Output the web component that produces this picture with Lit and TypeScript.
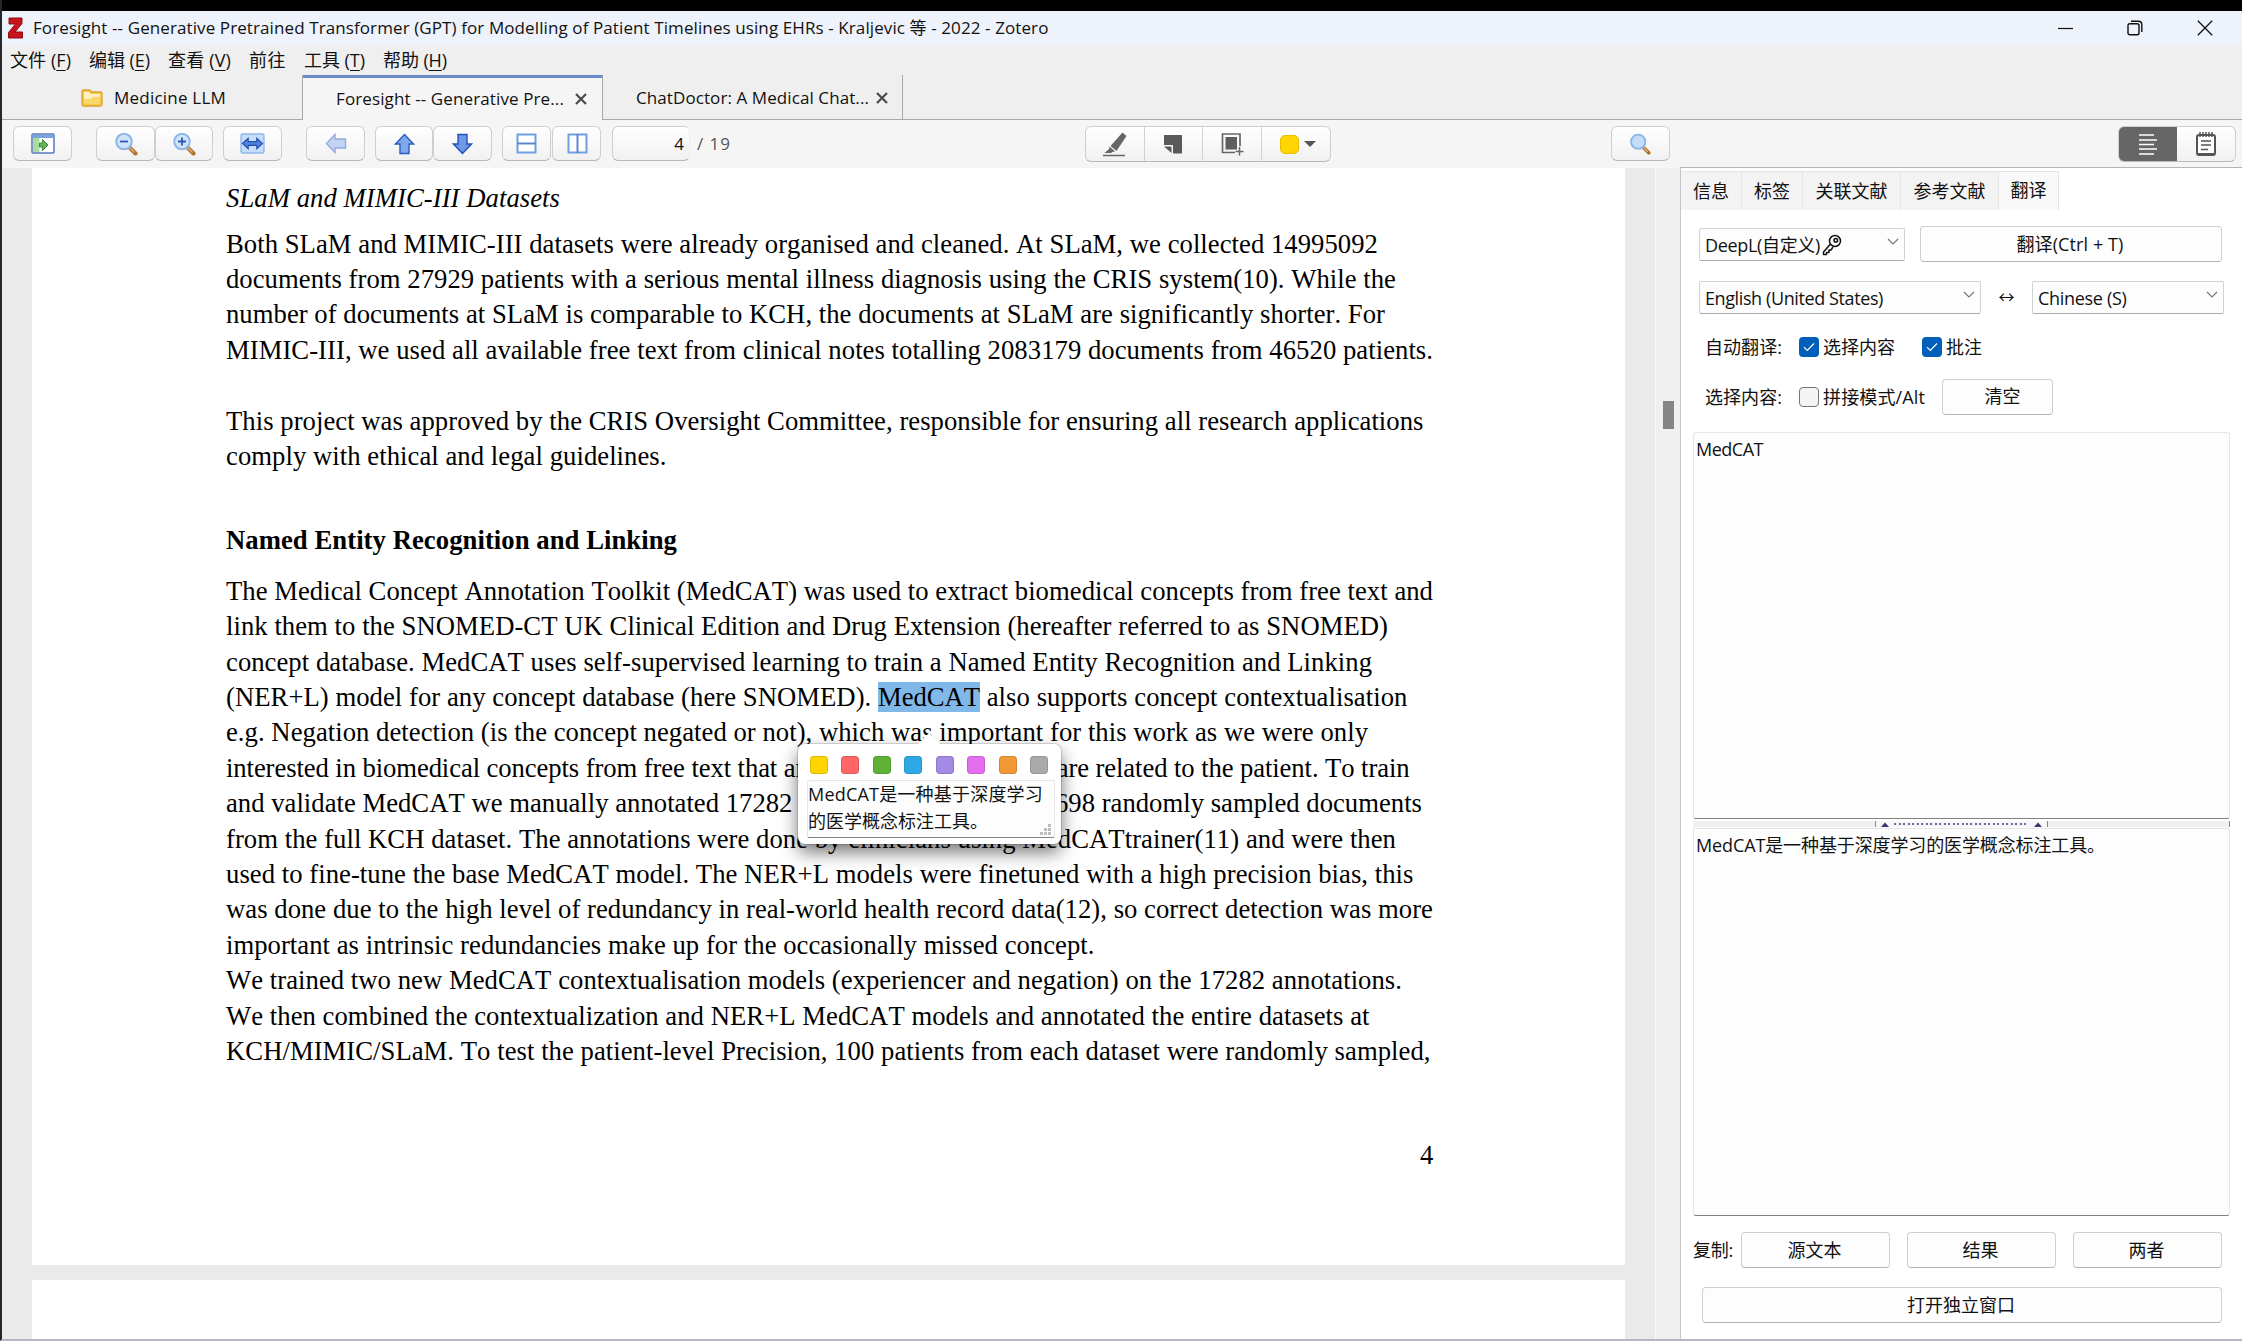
import { LitElement, html, css, svg } from "lit";
import { customElement, property, query } from "lit/decorators.js";
import { styleMap } from "lit/directives/style-map.js";

/* Text set to a fixed measure: the tracking is derived from the natural width. */
@customElement("fit-text")
class FitText extends LitElement {
  @property({ type: Number }) w = 0;
  @query(".run") run!: HTMLElement;
  static styles = css`
    :host { display: inline-block; white-space: pre; flex: none; }
  `;
  render() {
    return html`<span class="run"><slot></slot></span>`;
  }
  updated() {
    if (!this.w) return;
    const count = (this.textContent || "").length;
    this.style.letterSpacing = "0px";
    const natural = this.run.getBoundingClientRect().width;
    this.style.letterSpacing = `${(this.w - natural) / count}px`;
    this.style.width = `${this.w}px`;
  }
}

const blueStroke = "#5b86cf";

const icons = {
  zotero: svg`<svg width="16" height="22" viewBox="0 0 16 22"><path d="M1 1h13v5.500L7 15h7.500v6H.5v-5.500L7.500 7H1z" fill="#c8141c" stroke="#8f0d12" stroke-width="1"/></svg>`,
  folder: svg`<svg width="22" height="18" viewBox="0 0 22 18"><path d="M1 2.500q0-1.500 1.500-1.500h6l2 2h9q1.500 0 1.500 1.500v11q0 1.500-1.500 1.500h-17Q1 17 1 15.500z" fill="#f6c94a" stroke="#dda32b" stroke-width="1.300"/><path d="M3 3h5l2 2h9v3h-7l-2 2H3z" fill="#fdf1c0"/><path d="M3 10h8l2-2h6v7H3z" fill="#f9d86a"/></svg>`,
  close: svg`<svg width="14" height="14" viewBox="0 0 14 14"><path d="M2 2l10 10M12 2L2 12" stroke="#4a4a4a" stroke-width="2.200"/></svg>`,
  sidebar: svg`<svg width="24" height="21" viewBox="0 0 24 21"><rect x="1" y="1" width="22" height="19" rx="1" fill="#fff" stroke="#5577b8" stroke-width="1.500"/><path d="M1.500 1.500h21v3.500h-21z" fill="#7aa3dd"/><path d="M2 5h6.500v14H2z" fill="#a9dc9d"/><path d="M8.500 10h3V6.500l5.500 5.500-5.500 5.500V14h-3z" fill="#66b35c" stroke="#3c8a3c" stroke-width="1"/></svg>`,
  zoomOut: svg`<svg width="24" height="24" viewBox="0 0 24 24"><path d="M15.500 15.500l6 6" stroke="#b0712c" stroke-width="4" stroke-linecap="round"/><path d="M15.500 15.500l5 5" stroke="#e2b077" stroke-width="1.400"/><circle cx="10" cy="9.500" r="7.800" fill="#cfe3fa" stroke="#8db6e8" stroke-width="2"/><path d="M6 9.500h8" stroke="#2f57b5" stroke-width="1.800"/></svg>`,
  zoomIn: svg`<svg width="24" height="24" viewBox="0 0 24 24"><path d="M15.500 15.500l6 6" stroke="#b0712c" stroke-width="4" stroke-linecap="round"/><path d="M15.500 15.500l5 5" stroke="#e2b077" stroke-width="1.400"/><circle cx="10" cy="9.500" r="7.800" fill="#cfe3fa" stroke="#8db6e8" stroke-width="2"/><path d="M6 9.500h8M10 5.500v8" stroke="#2f57b5" stroke-width="1.800"/></svg>`,
  find: svg`<svg width="22" height="22" viewBox="0 0 24 24"><path d="M15.500 15.500l6 6" stroke="#b0712c" stroke-width="4" stroke-linecap="round"/><path d="M15.500 15.500l5 5" stroke="#e2b077" stroke-width="1.400"/><circle cx="10" cy="9.500" r="7.800" fill="#c3dcf8" stroke="#8db6e8" stroke-width="2"/></svg>`,
  fitWidth: svg`<svg width="25" height="21" viewBox="0 0 26 22"><rect x="1" y="1" width="24" height="20" rx="1.500" fill="#c6defa" stroke="#8fb8ea" stroke-width="1.500"/><path d="M2.500 11l6-5.500v3.500h9V5.500l6 5.500-6 5.500V13h-9v3.500z" fill="#4f83dc" stroke="#2450b0" stroke-width="1.200"/></svg>`,
  back: svg`<svg width="22" height="21" viewBox="0 0 22 21"><path d="M1.500 10.500L10 1.500V6h10.500v9H10v4.500z" fill="#c3d4f3" stroke="#94abe0" stroke-width="1.400"/></svg>`,
  up: svg`<svg width="21" height="22" viewBox="0 0 21 22"><path d="M10.500 1.500L19.500 11H15v9.500H6V11H1.500z" fill="#7fa9ea" stroke="#2f5cc0" stroke-width="1.400"/></svg>`,
  down: svg`<svg width="21" height="22" viewBox="0 0 21 22"><path d="M10.500 20.500L1.500 11H6V1.500h9V11h4.500z" fill="#6c9ae6" stroke="#2450b8" stroke-width="1.400"/></svg>`,
  rows: svg`<svg width="21" height="21" viewBox="0 0 21 21"><rect x="1.500" y="1.500" width="18" height="18" fill="#fff" stroke="#6f9fe3" stroke-width="2"/><path d="M1 10.500h19" stroke="${blueStroke}" stroke-width="2"/></svg>`,
  cols: svg`<svg width="21" height="21" viewBox="0 0 21 21"><rect x="1.500" y="1.500" width="18" height="18" fill="#fff" stroke="#6f9fe3" stroke-width="2"/><path d="M10.500 1v19" stroke="${blueStroke}" stroke-width="2"/></svg>`,
  pen: svg`<svg width="26" height="26" viewBox="0 0 26 26"><path d="M20.500 1.500l4 3.500-10 15-6-5z" fill="#666"/><path d="M7.500 15.500l5.500 5-2.500.500-1.500 1H2.500l4.500-4z" fill="#666"/><path d="M1 24.500h22" stroke="#666" stroke-width="1.500"/></svg>`,
  note: svg`<svg width="20" height="20" viewBox="0 0 20 20"><path d="M1 1h18v18.500h-9V11H1z" fill="#595959"/><path d="M1 12.500h7.500V19z" fill="#595959"/></svg>`,
  area: svg`<svg width="23" height="24" viewBox="0 0 23 24"><path d="M14 20.500H1.500V2H19V14" fill="none" stroke="#666" stroke-width="1.700"/><path d="M4.500 5h11.500v12.500H4.500z" fill="#5e5e5e"/><path d="M18.500 15v8.500M14.500 19.500h8" stroke="#666" stroke-width="1.500"/></svg>`,
  item: svg`<svg width="20" height="24" viewBox="0 0 20 24"><path d="M1 3h15M1 8h18M1 12.500h15M1 17h18M1 22h15" stroke="#fff" stroke-width="1.700"/></svg>`,
  notes: svg`<svg width="22" height="26" viewBox="0 0 22 26"><rect x="2" y="4" width="18" height="20" rx="2" fill="#fff" stroke="#555" stroke-width="2"/><path d="M3 23.500h16" stroke="#555" stroke-width="3"/><path d="M5 1v5M8 1v5M11 1v5M14 1v5M17 1v5" stroke="#555" stroke-width="1.500"/><path d="M6 10h10M6 14h10M6 18.500h7" stroke="#555" stroke-width="1.500"/></svg>`,
  chevron: svg`<svg width="12" height="7" viewBox="0 0 12 7"><path d="M1 1l5 5 5-5" fill="none" stroke="#777" stroke-width="1.200"/></svg>`,
  key: svg`<svg width="20" height="22" viewBox="0 0 20 22"><g fill="none" stroke="#111" stroke-width="1.500" stroke-linejoin="round"><circle cx="13" cy="7" r="5.500"/><circle cx="13.800" cy="6.200" r="1.800"/><path d="M8.500 10L1.500 18v2.500h3V18.500h2.500V16h2l2-3"/></g></svg>`,
  tick: svg`<svg width="12" height="10" viewBox="0 0 12 10"><path d="M1 5.200l3.300 3.300L11 1.500" fill="none" stroke="#fff" stroke-width="1.200"/></svg>`,
  minimise: svg`<svg width="15" height="16" viewBox="0 0 15 16"><path d="M0 8.500h15" stroke="#111" stroke-width="1.200"/></svg>`,
  restore: svg`<svg width="16" height="16" viewBox="0 0 16 16"><g fill="none" stroke="#111" stroke-width="1.400"><rect x="1" y="3.700" width="11" height="11" rx="1.800"/><path d="M4 1.200h7.500q3.300 0 3.300 3.300V12"/></g></svg>`,
  exit: svg`<svg width="16" height="16" viewBox="0 0 16 16"><path d="M.8.800l14.400 14.400M15.200.800L.8 15.200" stroke="#111" stroke-width="1.300"/></svg>`,
  grip: svg`<svg width="11" height="11" viewBox="0 0 11 11"><path d="M8 0h3v3H8zM4 4h3v3H4zM8 4h3v3H8zM0 8h3v3H0zM4 8h3v3H4zM8 8h3v3H8z" fill="#bdbdbd"/></svg>`,
  triangle: svg`<svg width="8" height="5" viewBox="0 0 8 5"><path d="M0 5L4 .5 8 5z" fill="#383870"/></svg>`,
};

type Line = [string, number];
const intro: Line[] = [
  ["Both SLaM and MIMIC-III datasets were already organised and cleaned. At SLaM, we collected 14995092", 1152],
  ["documents from 27929 patients with a serious mental illness diagnosis using the CRIS system(10). While the", 1170],
  ["number of documents at SLaM is comparable to KCH, the documents at SLaM are significantly shorter. For", 1159],
  ["MIMIC-III, we used all available free text from clinical notes totalling 2083179 documents from 46520 patients.", 1207],
];
const approval: Line[] = [
  ["This project was approved by the CRIS Oversight Committee, responsible for ensuring all research applications", 1197.5],
  ["comply with ethical and legal guidelines.", 440.5],
];
const nerBefore: Line[] = [
  ["The Medical Concept Annotation Toolkit (MedCAT) was used to extract biomedical concepts from free text and", 1207],
  ["link them to the SNOMED-CT UK Clinical Edition and Drug Extension (hereafter referred to as SNOMED)", 1162],
  ["concept database. MedCAT uses self-supervised learning to train a Named Entity Recognition and Linking", 1146],
];
const nerAfter: Line[] = [
  ["e.g. Negation detection (is the concept negated or not), which was important for this work as we were only", 1142],
  ["interested in biomedical concepts from free text that are correctly verified and are related to the patient. To train", 1183.5],
  ["and validate MedCAT we manually annotated 17282 concept examples from 698 randomly sampled documents", 1196],
  ["from the full KCH dataset. The annotations were done by clinicians using MedCATtrainer(11) and were then", 1170],
  ["used to fine-tune the base MedCAT model. The NER+L models were finetuned with a high precision bias, this", 1187.5],
  ["was done due to the high level of redundancy in real-world health record data(12), so correct detection was more", 1207],
  ["important as intrinsic redundancies make up for the occasionally missed concept.", 868.5],
  ["We trained two new MedCAT contextualisation models (experiencer and negation) on the 17282 annotations.", 1176],
  ["We then combined the contextualization and NER+L MedCAT models and annotated the entire datasets at", 1143.5],
  ["KCH/MIMIC/SLaM. To test the patient-level Precision, 100 patients from each dataset were randomly sampled,", 1204.5],
];
const swatches = ["#ffd400", "#ff6666", "#5fb236", "#2ea8e5", "#a28ae5", "#e56eee", "#f19837", "#aaaaaa"];

const lines = (list: Line[]) =>
  list.map(([t, w]) => html`<div class="line"><fit-text .w=${w}>${t}</fit-text></div>`);

@customElement("app-root")
class AppRoot extends LitElement {
  static styles = css`
    :host { display: block; width: 2242px; height: 1341px; overflow: hidden; background: #000;
      font: 17px/24px "Open Sans", "Noto Sans CJK SC", sans-serif; color: #111; }
    * { box-sizing: border-box; }
    svg { display: block; flex: none; }
    .window { height: 1341px; padding-top: 11px; border-left: 2px solid #26262e; border-bottom: 2px solid #b3b8c4;
      display: flex; flex-direction: column; background: #f5f5f5; background-clip: content-box; }
    .title { height: 34px; background: #eef2fa; display: flex; align-items: center; padding: 0 29px 0 6px; }
    .title fit-text { margin-left: 9px; }
    .title .controls { margin-left: auto; display: flex; gap: 54px; align-items: center; }
    .menu { height: 30px; background: #efefef; display: flex; align-items: center; padding-left: 8px; gap: 18px; padding-bottom: 1px; }
    .cjk { font-size: 18px; }
    u { text-underline-offset: 3px; text-decoration-thickness: 1px; }
    .tabs { height: 45px; background: #efefef; display: flex; flex: none; }
    .tab { display: flex; align-items: center; height: 45px; width: 301px; border-right: 1px solid #a8a8a8; border-bottom: 1px solid #a8a8a8; padding-top: 2px; }
    .tab.lib { padding-left: 79px; gap: 11px; }
    .tab.active { border-top: 3px solid #6a8cca; border-bottom: none; background: #f5f5f5; padding: 0 0 1px 33px; gap: 10px; width: 300px; }
    .tab.other { padding-left: 33px; gap: 6px; width: 300px; }
    .tabrest { flex: 1; border-bottom: 1px solid #a8a8a8; }
    .bar { height: 48px; flex: none; background: #f5f5f5; display: flex; padding: 6px 0 0 11px; align-items: flex-start; }
    .btn { height: 35px; border: 1px solid #cfcfcf; border-bottom-color: #b8b8b8; border-radius: 6px; background: linear-gradient(#fff, #f1f1f1);
      display: flex; align-items: center; justify-content: center; flex: none; }
    .w58 { width: 58.5px; padding-left: 1px; } .w49 { width: 49px; padding-left: 1px; }
    .g24 { margin-left: 24.5px; } .g10 { margin-left: 10px; } .g2 { margin-left: 1.5px; }
    .pageno { width: 78px; margin-left: 11px; justify-content: flex-end; padding-right: 5px; border-right-color: #eee; }
    .total { line-height: 35px; margin-left: 7px; color: #555; width: 34px; }
    .tools { margin-left: 354px; height: 36px; padding: 0; }
    .tool { width: 58.5px; height: 34px; border-right: 1px solid #d2d2d2; display: flex; align-items: center; justify-content: center; }
    .tool.nudge { padding-left: 2px; }
    .tool.pick { width: 68.5px; border: none; gap: 5px; padding-left: 4px; }
    .dot { width: 19px; height: 19px; border-radius: 5px; background: #ffd400; border: 1px solid #eabf00; }
    .caret { border: 6px solid transparent; border-top-color: #555; border-bottom: none; }
    .find { width: 59px; margin-left: 279.5px; }
    .toggle { margin-left: 448px; width: 118px; height: 36px; overflow: hidden; justify-content: flex-start; }
    .toggle .on { width: 58px; height: 36px; background: #666; display: flex; align-items: center; justify-content: center; }
    .toggle .off { width: 58px; display: flex; justify-content: center; }
    .main { flex: 1; display: flex; min-height: 0; }
    .reader { width: 1654px; background: #eaeaea; border-right: 1px solid #fafafa; overflow: hidden; flex: none; position: relative; padding-left: 30px; }
    .sheet { width: 1593px; background: #fff; color: #000; font: 26.67px/35.4px "Liberation Serif", serif; padding-left: 194px; font-kerning: none; }
    .sheet.cur { height: 1097px; padding-top: 13px; margin-bottom: 15px; }
    .sheet.next { height: 60px; }
    .line { height: 35.4px; display: flex; }
    .sub { font-style: italic; margin-bottom: 10.2px; }
    .gap { height: 35.4px; }
    .head { font-weight: bold; margin: 48.5px 0 15.7px; }
    .hit { background: #80b9e9; }
    .folio { margin-top: 68.5px; padding-left: 1194px; }
    .scroll { width: 24px; background: #f0f0f0; flex: none; padding: 233px 0 0 7px; }
    .thumb { width: 11px; height: 28px; background: #858585; }
    .side { flex: 1; background: #fff; border-left: 1px solid #c6c6c6; border-top: 1px solid #b5b5b5; margin-top: -1px; padding-top: 3px; font-size: 18px; }
    .stabs { display: flex; height: 39px; }
    .stab { width: 61px; border: 1px solid #e4e4e4; border-left: none; border-bottom: none; background: #f3f3f3; display: flex; justify-content: center; align-items: center; padding-bottom: 1px; }
    .stab.wide { width: 98px; } .stab.sel { width: 60px; background: #f9f9f9; padding-bottom: 2px; }
    .row { display: flex; align-items: center; height: 36px; padding-left: 18px; }
    .r1 { margin-top: 16px; } .r2 { margin-top: 17px; } .r3 { margin-top: 13.5px; padding-left: 24px; } .r4 { margin-top: 14px; padding-left: 24px; }
    .select { height: 33px; border: 1px solid #d2d2d2; border-bottom-color: #aaa; border-radius: 2px; background: #fdfdfd; display: flex; align-items: center; padding: 1px 5px 0 5px; }
    .select .chev { margin-left: auto; margin-top: -6px; }
    .select .k { margin-left: 2px; }
    .push { height: 36px; border: 1px solid #cfcfcf; border-bottom-color: #b5b5b5; border-radius: 4px; background: #fdfdfd; display: flex; align-items: center; justify-content: center; padding: 0 2px 1px 0; }
    .push.clear { padding: 0 0 1px 10px; }
    .swap { width: 51px; text-align: center; font-size: 16px; }
    .check { width: 20px; height: 20px; border-radius: 4px; background: #005fb8; display: flex; align-items: center; justify-content: center; margin-right: 4px; }
    .check.empty { background: #f4f4f4; border: 1px solid #777; }
    .area { margin: 0 12px; border: 1px solid #e6e6e6; border-bottom: 1px solid #808080; border-radius: 3px; background: #fdfdfd; padding: 3px 2px; line-height: 26px; }
    .a1 { margin-top: 17.5px; height: 387px; } .a2 { height: 388px; margin-top: 1px; }
    .split { margin: 2px 12px 0; height: 6px; background: #f0f0f0; display: flex; justify-content: center; border-right: 1px solid #888; }
    .gripper { width: 173px; border: solid #888; border-width: 0 1px; display: flex; align-items: center; justify-content: space-between; padding: 0 5px; background: #f7f7f7; }
    .dots { width: 134px; height: 2px; background: repeating-linear-gradient(90deg, #6a6a9c 0 2px, transparent 2px 4.500px); }
    .copy { margin-top: 16px; padding-left: 12px; gap: 17px; }
    .copy fit-text { margin-right: -9px; }
    .pop { position: absolute; left: 796px; top: 576px; width: 263px; height: 100px; background: #fff; border-radius: 7px;
      box-shadow: 0 0 0 1px rgba(0,0,0,.13), 0 8px 18px rgba(0,0,0,.55); padding: 12px 6px 0 9px; font-size: 18px; }
    .pop::before { content: ""; position: absolute; left: 119px; top: -11px; border: 12px solid transparent; border-top: none; border-bottom: 12px solid #fff; }
    .swatches { display: flex; justify-content: space-between; padding: 0 7px 0 3px; }
    .sw { width: 18px; height: 18px; border-radius: 4px; box-shadow: inset 0 0 0 1px rgba(0,0,0,.12); }
    .popt { margin-top: 6px; height: 58px; border: 1px solid #e6e6e6; border-bottom-color: #808080; line-height: 27px; background: #fdfdfd; position: relative; border-radius: 2px; }
    .popt fit-text { display: block; }
    .popt .grip { position: absolute; right: 3px; bottom: 2px; }
  `;

  render() {
    return html`<div class="window">
      <div class="title">
        ${icons.zotero}
        <fit-text .w=${1015.5}>Foresight -- Generative Pretrained Transformer (GPT) for Modelling of Patient Timelines using EHRs - Kraljevic 等 - 2022 - Zotero</fit-text>
        <div class="controls">${icons.minimise}${icons.restore}${icons.exit}</div>
      </div>
      <div class="menu cjk">
        <fit-text .w=${61}>文件 (<u>F</u>)</fit-text>
        <fit-text .w=${61}>编辑 (<u>E</u>)</fit-text>
        <fit-text .w=${63}>查看 (<u>V</u>)</fit-text>
        <fit-text .w=${37}>前往</fit-text>
        <fit-text .w=${61}>工具 (<u>T</u>)</fit-text>
        <fit-text .w=${64}>帮助 (<u>H</u>)</fit-text>
      </div>
      <div class="tabs">
        <div class="tab lib">${icons.folder}<fit-text .w=${112}>Medicine LLM</fit-text></div>
        <div class="tab active"><fit-text .w=${228}>Foresight -- Generative Pre...</fit-text>${icons.close}</div>
        <div class="tab other"><fit-text .w=${233}>ChatDoctor: A Medical Chat...</fit-text>${icons.close}</div>
        <div class="tabrest"></div>
      </div>
      <div class="bar">
        <div class="btn w58">${icons.sidebar}</div>
        <div class="btn w58 g24">${icons.zoomOut}</div>
        <div class="btn w58">${icons.zoomIn}</div>
        <div class="btn w58 g10">${icons.fitWidth}</div>
        <div class="btn w58 g24">${icons.back}</div>
        <div class="btn w58 g10">${icons.up}</div>
        <div class="btn w58">${icons.down}</div>
        <div class="btn w49 g10">${icons.rows}</div>
        <div class="btn w49 g2">${icons.cols}</div>
        <div class="btn pageno">4</div>
        <div class="total"><fit-text .w=${34}>/ 19</fit-text></div>
        <div class="btn tools">
          <div class="tool">${icons.pen}</div>
          <div class="tool">${icons.note}</div>
          <div class="tool nudge">${icons.area}</div>
          <div class="tool pick"><span class="dot"></span><span class="caret"></span></div>
        </div>
        <div class="btn find">${icons.find}</div>
        <div class="btn toggle"><div class="on">${icons.item}</div><div class="off">${icons.notes}</div></div>
      </div>
      <div class="main">
        <div class="reader">
          <div class="sheet cur">
            <div class="line sub"><fit-text .w=${334}>SLaM and MIMIC-III Datasets</fit-text></div>
            ${lines(intro)}
            <div class="gap"></div>
            ${lines(approval)}
            <div class="line head"><fit-text .w=${451}>Named Entity Recognition and Linking</fit-text></div>
            ${lines(nerBefore)}
            <div class="line"><fit-text .w=${652}>(NER+L) model for any concept database (here SNOMED). </fit-text><fit-text .w=${102}><span class="hit">MedCAT</span></fit-text><fit-text .w=${427.5}> also supports concept contextualisation</fit-text></div>
            ${lines(nerAfter)}
            <div class="line folio">4</div>
          </div>
          <div class="sheet next"></div>
          <div class="pop">
            <div class="swatches">${swatches.map((c) => html`<span class="sw" style=${styleMap({ background: c })}></span>`)}</div>
            <div class="popt">
              <fit-text .w=${235}>MedCAT是一种基于深度学习</fit-text>
              <fit-text .w=${180}>的医学概念标注工具。</fit-text>
              <span class="grip">${icons.grip}</span>
            </div>
          </div>
        </div>
        <div class="scroll"><div class="thumb"></div></div>
        <div class="side">
          <div class="stabs">
            <div class="stab">信息</div><div class="stab">标签</div>
            <div class="stab wide">关联文献</div><div class="stab wide">参考文献</div>
            <div class="stab sel">翻译</div>
          </div>
          <div class="row r1">
            <div class="select" style=${styleMap({ width: "206px" })}><fit-text .w=${115}>DeepL(自定义)</fit-text><span class="k">${icons.key}</span><span class="chev">${icons.chevron}</span></div>
            <div class="push" style=${styleMap({ width: "302px", marginLeft: "15px" })}><fit-text .w=${107}>翻译(Ctrl + T)</fit-text></div>
          </div>
          <div class="row r2">
            <div class="select" style=${styleMap({ width: "282px" })}><fit-text .w=${178}>English (United States)</fit-text><span class="chev">${icons.chevron}</span></div>
            <span class="swap">↔</span>
            <div class="select" style=${styleMap({ width: "192px" })}><fit-text .w=${88.5}>Chinese (S)</fit-text><span class="chev">${icons.chevron}</span></div>
          </div>
          <div class="row r3">
            <fit-text .w=${77}>自动翻译:</fit-text>
            <span class="check" style=${styleMap({ marginLeft: "17px" })}>${icons.tick}</span>选择内容
            <span class="check" style=${styleMap({ marginLeft: "27px" })}>${icons.tick}</span>批注
          </div>
          <div class="row r4">
            <fit-text .w=${77}>选择内容:</fit-text>
            <span class="check empty" style=${styleMap({ marginLeft: "17px" })}></span><fit-text .w=${102}>拼接模式/Alt</fit-text>
            <div class="push clear" style=${styleMap({ width: "111px", marginLeft: "17px" })}>清空</div>
          </div>
          <div class="area a1"><fit-text .w=${67}>MedCAT</fit-text></div>
          <div class="split"><div class="gripper">${icons.triangle}<span class="dots"></span>${icons.triangle}</div></div>
          <div class="area a2"><fit-text .w=${409}>MedCAT是一种基于深度学习的医学概念标注工具。</fit-text></div>
          <div class="row copy">
            <fit-text .w=${40}>复制:</fit-text>
            <div class="push" style=${styleMap({ width: "149px" })}>源文本</div>
            <div class="push" style=${styleMap({ width: "149px" })}>结果</div>
            <div class="push" style=${styleMap({ width: "149px" })}>两者</div>
          </div>
          <div class="row" style=${styleMap({ marginTop: "19px", paddingLeft: "21px" })}>
            <div class="push" style=${styleMap({ width: "520px" })}>打开独立窗口</div>
          </div>
        </div>
      </div>
    </div>`;
  }
}
